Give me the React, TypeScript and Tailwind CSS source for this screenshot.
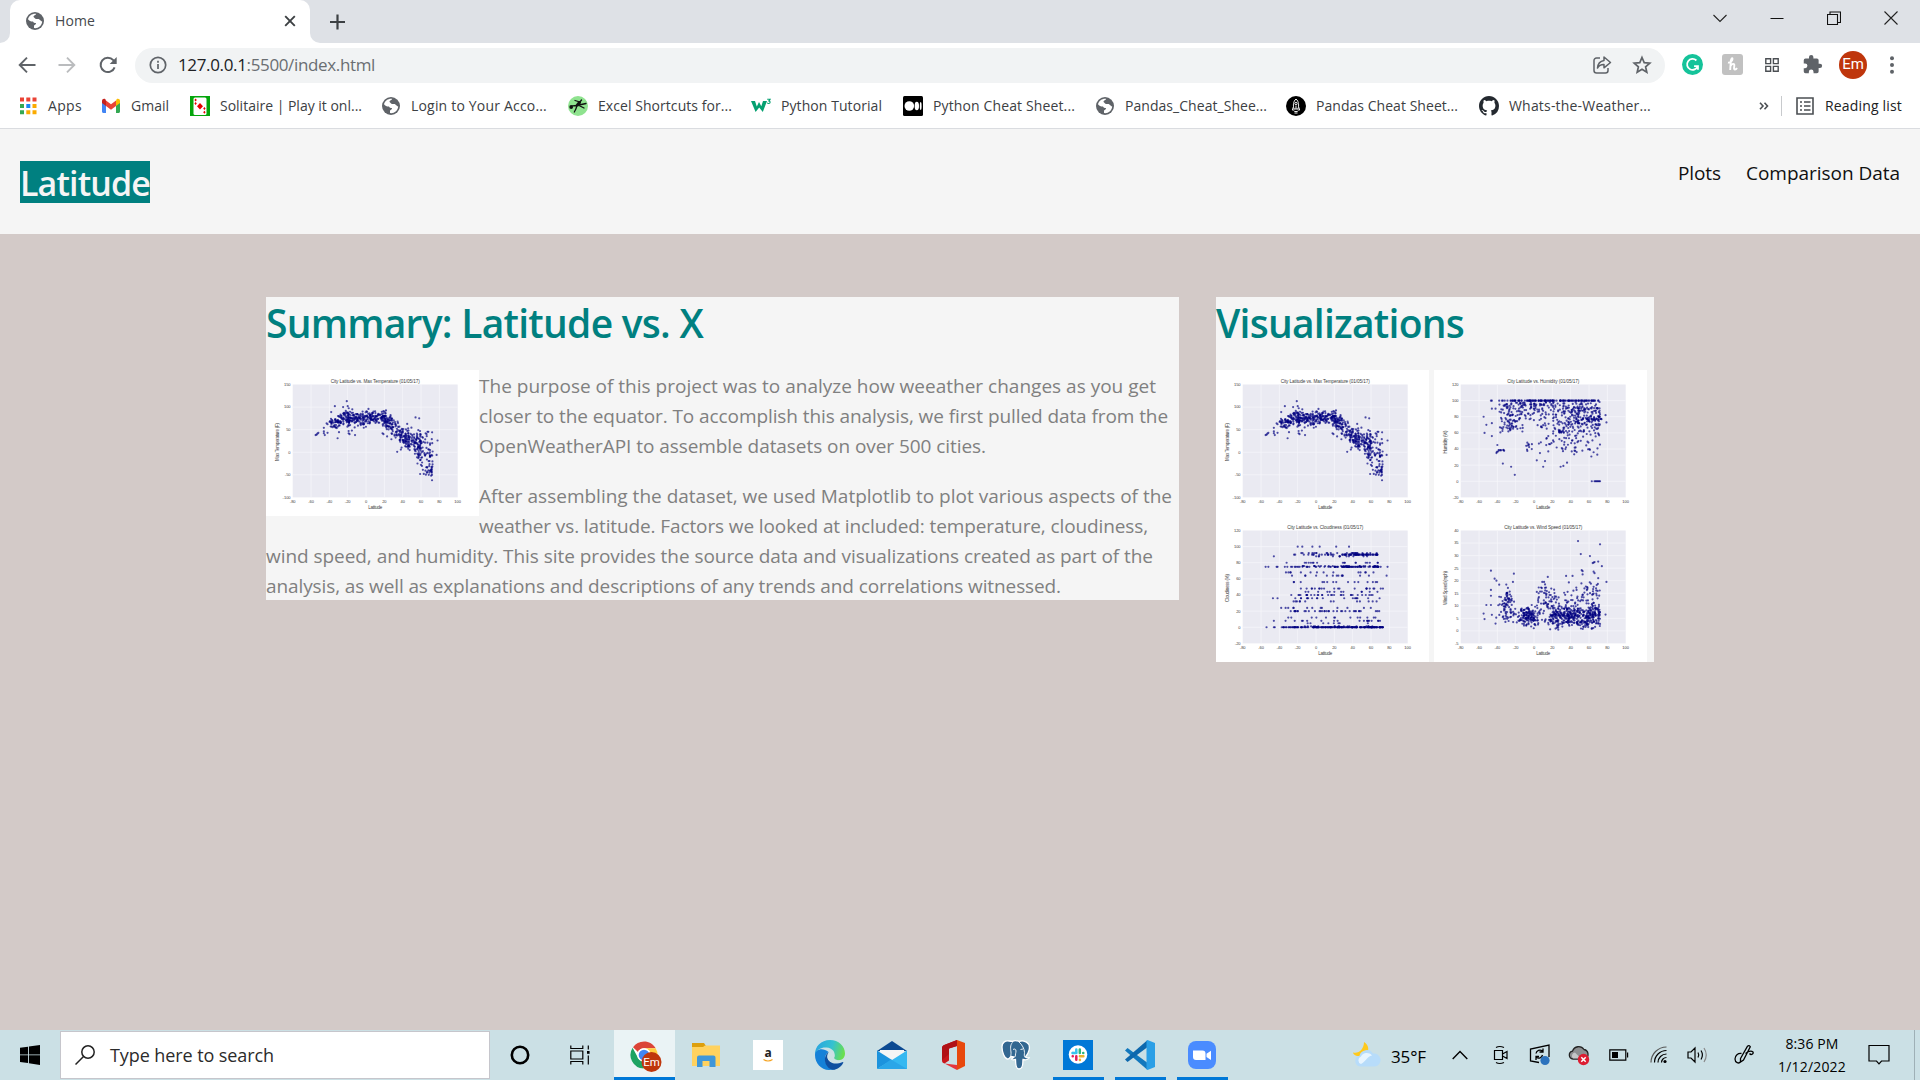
import { useLayoutEffect, useRef, type ReactNode } from 'react';

/* Text set to an exact advance width by spreading the difference over its letters. */
function Fit({ w, children, className = '' }: { w: number; children: ReactNode; className?: string }) {
  const ref = useRef<HTMLSpanElement>(null);
  useLayoutEffect(() => {
    const el = ref.current;
    if (!el) return;
    el.style.letterSpacing = '0px';
    const natural = el.getBoundingClientRect().width;
    const count = el.textContent ? el.textContent.length : 1;
    el.style.letterSpacing = `${(w - natural) / count}px`;
  }, [w]);
  return (
    <span ref={ref} className={`inline-block whitespace-nowrap ${className}`}>
      {children}
    </span>
  );
}

/* ---------- charts ---------- */

type Point = [number, number];

function rng(seed: number) {
  let s = seed;
  return () => {
    s = (s + 0x6d2b79f5) | 0;
    let t = Math.imul(s ^ (s >>> 15), 1 | s);
    t = (t + Math.imul(t ^ (t >>> 7), 61 | t)) ^ t;
    return ((t ^ (t >>> 14)) >>> 0) / 4294967296;
  };
}

const gauss = (r: () => number) => r() + r() + r() + r() - 2;

function temperature(): Point[] {
  const r = rng(7);
  const pts: Point[] = [
    [-21, 113], [-34, 102], [-20, 102], [-25, 100], [-38, 89], [-15, 95], [54, 77], [58, 75], [-55, 38], [-54, 39],
    [-53, 41], [-52, 43], [-46, 54], [-46, 46], [-46, 42], [-45, 38], [-42, 43], [-31, 31], [-19, 47], [-18, 40],
    [-12, 38], [-19, 42], [18, 42], [19, 40], [23, 35], [34, 1], [38, 6], [78, 26], [77, -6], [57, 49], [65, 42],
    [66, 40], [72, -62], [72, -50], [71, -52], [63, -48], [62, -39], [-42, 62], [-43, 64],
  ];
  const mean = (x: number) => {
    if (x < -20) return 74 + (x + 20) * 0.55;
    if (x < 18) return 77;
    if (x < 40) return 77 - (x - 18) * 1.75;
    return 38.5 - (x - 40) * 1.3;
  };
  for (let i = 0; i < 95; i++) {
    const x = -40 + r() * 22;
    pts.push([x, mean(x) + gauss(r) * 15]);
  }
  for (let i = 0; i < 220; i++) {
    const x = -21 + r() * 43;
    pts.push([x, mean(x) + gauss(r) * 12 - (r() < 0.1 ? 14 : 0)]);
  }
  for (let i = 0; i < 235; i++) {
    const x = 20 + r() * 40;
    pts.push([x, mean(x) + gauss(r) * (x > 42 ? 24 : 19)]);
  }
  for (let i = 0; i < 75; i++) {
    const x = 56 + r() * 17;
    pts.push([x, 6 + gauss(r) * 36]);
  }
  for (let i = 0; i < 20; i++) pts.push([64 + r() * 8, -42 + gauss(r) * 12]);
  return pts;
}

function humidity(): Point[] {
  const r = rng(21);
  const pts: Point[] = [
    [-55, 80], [-54, 60], [-52, 70], [-46, 90], [-42, 90], [-46, 56], [-46, 72], [-40, 45], [-41, 35], [-34, 22],
    [-25, 18], [-21, 8], [3, 26], [10, 18], [12, 25], [29, 18], [32, 19], [36, 23], [69, 33], [78, 82], [79, 73],
    [63, 0], [66, 0], [67, 0], [68, 0], [69, 0], [70, 0], [71, 0], [72, 0], [61, 39], [65, 36],
  ];
  for (let i = 0; i < 110; i++) pts.push([-26 + r() * 99, 100]);
  for (const x of [-47, -46, -38, -35, -34, -32, -29]) pts.push([x, 100]);
  for (let i = 0; i < 85; i++) pts.push([-38 + r() * 20, 98 - r() * 38]);
  for (let i = 0; i < 110; i++) pts.push([-20 + r() * 42, 98 - r() * r() * 44]);
  for (let i = 0; i < 250; i++) pts.push([20 + r() * 52, 76 + gauss(r) * 32]);
  for (let i = 0; i < 70; i++) pts.push([36 + r() * 36, 92 - r() * 22]);
  for (let i = 0; i < 16; i++) pts.push([56 + r() * 18, 76 + r() * 2]);
  for (let i = 0; i < 38; i++) pts.push([-10 + r() * 60, 33 + r() * 25]);
  for (let i = 0; i < 9; i++) pts.push([-41 + r() * 9, 35 + r() * 4]);
  return pts.filter((p) => p[1] <= 100);
}

function cloudiness(): Point[] {
  const r = rng(33);
  const pts: Point[] = [
    [-20, 100], [-15, 100], [-4, 100], [4, 100], [22, 100], [36, 100], [-46, 88], [-54, 0], [-46, 0], [-45, 0],
    [-55, 75], [-52, 75], [-43, 75], [-42, 75], [78, 75], [77, 64], [-47, 36], [-42, 36], [-38, 24], [-46, 8], [73, 48],
  ];
  const row = (y: number, n: number, a: number, b: number) => {
    for (let i = 0; i < n; i++) pts.push([a + r() * (b - a), y]);
  };
  row(0, 180, -4, 73);
  row(0, 36, -41, -5);
  row(75, 55, -36, 74);
  row(75, 30, 20, 70);
  row(76, 26, -16, 68);
  row(90, 60, 28, 67);
  row(92, 24, -38, 72);
  row(90, 16, -25, 20);
  row(88, 12, -10, 60);
  row(80, 18, -36, 72);
  row(68, 14, -36, 64);
  row(64, 13, -36, 64);
  row(56, 15, -30, 70);
  row(48, 20, -30, 72);
  row(44, 12, -12, 68);
  row(40, 30, -30, 64);
  row(36, 18, -34, 70);
  row(32, 13, -34, 70);
  row(24, 12, -34, 66);
  row(20, 34, -32, 72);
  row(12, 13, -34, 66);
  row(8, 18, -36, 70);
  row(5, 8, -10, 70);
  row(1, 18, -20, 70);
  return pts;
}

function wind(): Point[] {
  const r = rng(55);
  const pts: Point[] = [
    [48, 35.8], [72, 34.5], [51, 30.6], [61, 29.8], [70, 27.6], [65, 27.2], [64, 27], [66, 27.4], [74, 25.8], [-47, 24],
    [-22, 22.8], [52, 24.2], [53, 23.8], [53, 22.5], [65, 23.6], [66, 23], [15, 21.5], [35, 21.9], [42, 21.9], [-43, 20.8],
    [-41, 20], [-38, 18.4], [-47, 16.3], [-47, 14], [-52, 10.3], [-47, 10.3], [-39, 10.2], [-46, 6.4], [-55, 6.9],
    [-54, 4.7], [-42, 2.9], [79, 19.5], [78, 6.5], [70, 21], [9, 19.5], [11, 19.5], [12, 18.5], [-23, 19.5], [38, 19.3],
  ];
  for (let i = 0; i < 80; i++) pts.push([-29 + gauss(r) * 8, 8.5 + gauss(r) * 6 + r() * r() * 7]);
  for (let i = 0; i < 140; i++) pts.push([-7 + gauss(r) * 9, 4.7 + gauss(r) * 3.4 + r() * r() * r() * 6]);
  for (let i = 0; i < 70; i++) pts.push([3 + r() * 19, 2.5 + r() * 15]);
  for (let i = 0; i < 330; i++) pts.push([17 + r() * 55, 4.4 + gauss(r) * 3.6 + r() * r() * 4]);
  for (let i = 0; i < 130; i++) pts.push([22 + r() * 50, 6 + r() * r() * 14]);
  for (let i = 0; i < 24; i++) pts.push([48 + r() * 22, 12 + r() * 7]);
  return pts.filter((p) => p[1] > 0.4);
}

type Chart = {
  title: string;
  titleWidth: number;
  yLabel: string;
  yLabelWidth: number;
  yMin: number;
  yMax: number;
  step: number;
  points: Point[];
};

const charts: Chart[] = [
  { title: 'City Latitude vs. Max Temperature (01/05/17)', titleWidth: 89, yLabel: 'Max Temperature (F)', yLabelWidth: 38, yMin: -100, yMax: 150, step: 50, points: temperature() },
  { title: 'City Latitude vs. Humidity (01/05/17)', titleWidth: 72, yLabel: 'Humidity (%)', yLabelWidth: 23, yMin: -20, yMax: 120, step: 20, points: humidity() },
  { title: 'City Latitude vs. Cloudiness (01/05/17)', titleWidth: 76, yLabel: 'Cloudiness (%)', yLabelWidth: 28, yMin: -20, yMax: 120, step: 20, points: cloudiness() },
  { title: 'City Latitude vs. Wind Speed (01/05/17)', titleWidth: 78, yLabel: 'Wind Speed (mph)', yLabelWidth: 34, yMin: -5, yMax: 40, step: 5, points: wind() },
];

const L = 26.7;
const R = 191.7;
const T = 14.5;
const B = 127.4;
const sx = (v: number) => L + ((v + 80) / 180) * (R - L);

function Scatter({ chart, className = '' }: { chart: Chart; className?: string }) {
  const sy = (v: number) => B - ((v - chart.yMin) / (chart.yMax - chart.yMin)) * (B - T);
  const xs = Array.from({ length: 10 }, (_, i) => -80 + i * 20);
  const ys: number[] = [];
  for (let v = chart.yMin; v <= chart.yMax; v += chart.step) ys.push(v);
  const ly = (T + B) / 2 + 1;
  return (
    <svg viewBox="0 0 213 146" className={`block h-[146px] w-[213px] bg-white ${className}`} fontFamily="Liberation Sans, sans-serif" fill="#3c3c3c">
      <rect x={L} y={T} width={R - L} height={B - T} fill="#eaeaf2" />
      {xs.slice(1, -1).map((v) => (
        <line key={v} x1={sx(v)} x2={sx(v)} y1={T} y2={B} stroke="#f7f7fa" strokeWidth="0.7" />
      ))}
      {ys.slice(1, -1).map((v) => (
        <line key={v} x1={L} x2={R} y1={sy(v)} y2={sy(v)} stroke="#f7f7fa" strokeWidth="0.7" />
      ))}
      <g fill="#000080" fillOpacity="0.68">
        {chart.points.map((p, i) => (
          <circle key={i} cx={sx(p[0])} cy={sy(p[1])} r="1.1" />
        ))}
      </g>
      <text x={(L + R) / 2} y="12.6" textAnchor="middle" fontSize="4.7" textLength={chart.titleWidth}>
        {chart.title}
      </text>
      <text x={(L + R) / 2} y="139.4" textAnchor="middle" fontSize="4.5" textLength="14">
        Latitude
      </text>
      <text transform={`translate(13 ${ly}) rotate(-90)`} textAnchor="middle" fontSize="4.5" textLength={chart.yLabelWidth}>
        {chart.yLabel}
      </text>
      {xs.map((v) => (
        <text key={v} x={sx(v)} y="133.4" textAnchor="middle" fontSize="4">
          {v}
        </text>
      ))}
      {ys.map((v) => (
        <text key={v} x="24.6" y={sy(v) + 1.4} textAnchor="end" fontSize="4">
          {v}
        </text>
      ))}
    </svg>
  );
}

/* ---------- browser icons ---------- */

const Globe = () => (
  <svg viewBox="0 0 20 20" className="h-5 w-5 shrink-0">
    <circle cx="10" cy="10" r="9" fill="#5f6368" />
    <path d="M11.2 2.8c-3.6-.6-7.3 1.7-8.2 5.4 1.2 1.6 3 2.4 5 2.3.4 1.3 1.6 1.5 3 1.6 0 1.6-.9 1.8-2 2.4v2.6c4.3.6 8-2.600 8.2-6.600-1-.2-1.700-1-2.500-1.800-1-.9-2.500-.6-3.900-.6-1.200-1.300-2.500-1.800-2.300-2.600.3-1.200 2.200-.8 2.700-2.700z" fill="#fff" />
  </svg>
);

const AppsIcon = () => (
  <svg viewBox="0 0 20 20" className="h-5 w-5 shrink-0">
    <path d="M2 1.500h4v4H2zM8.300 1.500h4v4h-4zM14.500 1.500h4v4h-4z" fill="#ea4335" />
    <path d="M2 8h4v4H2zM2 14.300h4v4H2z" fill="#34a853" />
    <path d="M8.300 8h4v4h-4z" fill="#1a87f5" />
    <path d="M14.500 8h4v4h-4zM8.300 14.300h4v4h-4zM14.500 14.300h4v4h-4z" fill="#fbab00" />
  </svg>
);

const GmailIcon = () => (
  <svg viewBox="0 0 20 20" className="h-5 w-5 shrink-0">
    <path d="M1 5v10.500c0 .8.600 1.500 1.500 1.500H5V8z" fill="#4285f4" />
    <path d="M15 8v9h2.500c.9 0 1.500-.7 1.500-1.500V5z" fill="#34a853" />
    <path d="M15 5v5l4-3V5c0-1.900-2-2.800-3.400-1.700z" fill="#fbbc04" />
    <path d="M5 10V4.500l5 3.800 5-3.800V10l-5 3.700z" fill="#ea4335" />
    <path d="M1 5v2l4 3V4.500L4.400 3.300C3 2.200 1 3.100 1 5z" fill="#c5221f" />
  </svg>
);

const SolitaireIcon = () => (
  <svg viewBox="0 0 20 20" className="h-5 w-5 shrink-0">
    <path d="M0 0h20v20H0z" fill="#04a50b" />
    <rect x="3.500" y="1.500" width="13" height="17.500" rx="1.500" fill="#fff" />
    <path d="M10 7l3 3.200-3 3.200-3-3.200zM5.600 2.500l1.200 1.500-1.200 1.500L4.400 4zM5.600 6l1.200 1.500L5.600 9 4.400 7.500zM14.400 11l1.200 1.500-1.200 1.500-1.200-1.500zM14.400 14.800l1.200 1.500-1.200 1.500-1.200-1.500z" fill="#e60000" />
  </svg>
);

const ExcelIcon = () => (
  <svg viewBox="0 0 20 20" className="h-5 w-5 shrink-0">
    <circle cx="10" cy="10" r="10" fill="#8fe38f" />
    <g fill="none" stroke="#111" strokeLinecap="round">
      <path d="M9.500 9l2-2.500" strokeWidth="3" />
      <path d="M7 4.500l5 1.500 1.500-2M11 9l7-1.500M11 9.500l5 2.500M9 9.500c-.5 2-1 4-2.700 6.500M8.500 9.500l-4 .3" strokeWidth="1.300" />
    </g>
    <circle cx="3.200" cy="11" r="1.900" fill="#111" />
  </svg>
);

const W3Icon = () => (
  <svg viewBox="0 0 20 20" className="h-5 w-5 shrink-0">
    <path d="M0 5h4l1.800 5.500L8 6l2.300 4.300L12 5h4l-4.200 11L8.200 11.600 4.600 16z" fill="#04a070" />
    <path d="M16.200 3.200h3l-1.300 1.700c1.700.2 1.600 2.600-.1 2.600-.8 0-1.300-.3-1.600-.8" fill="none" stroke="#04a070" strokeWidth="1.100" />
  </svg>
);

const MediumIcon = () => (
  <svg viewBox="0 0 20 20" className="h-5 w-5 shrink-0">
    <rect width="20" height="20" rx="1.500" />
    <g fill="#fff">
      <circle cx="6.300" cy="10" r="4.800" />
      <ellipse cx="13.800" cy="10" rx="2.200" ry="4.300" />
      <ellipse cx="17.700" cy="10" rx=".9" ry="4" />
    </g>
  </svg>
);

const RocketIcon = () => (
  <svg viewBox="0 0 20 20" className="h-5 w-5 shrink-0">
    <circle cx="10" cy="10" r="10" />
    <g fill="none" stroke="#eee" strokeWidth="1">
      <path d="M10 3c3 2.500 3 6.500 2 10H8c-1-3.500-1-7.500 2-10z" />
      <circle cx="10" cy="7.500" r="1.200" />
      <path d="M7.500 10.500L6.300 14l2 0M12.500 10.500l1.200 3.500-2 0M8.300 15.500h3.400M10 9.500V13M8.500 17h3" />
    </g>
  </svg>
);

const GithubIcon = () => (
  <svg viewBox="0 0 16 16" className="h-5 w-5 shrink-0">
    <path d="M8 0C3.580 0 0 3.580 0 8c0 3.540 2.290 6.530 5.470 7.590.4.070.55-.17.55-.38 0-.19-.01-.82-.01-1.490-2.010.37-2.530-.49-2.690-.94-.09-.23-.48-.94-.82-1.130-.28-.15-.68-.52-.01-.53.63-.01 1.080.58 1.230.82.72 1.210 1.870.87 2.330.66.070-.52.28-.87.51-1.070-1.780-.2-3.640-.89-3.640-3.950 0-.87.31-1.590.82-2.150-.08-.2-.36-1.020.08-2.120 0 0 .67-.21 2.200.82.640-.18 1.320-.27 2-.27s1.360.09 2 .27c1.530-1.040 2.200-.82 2.200-.82.44 1.100.16 1.920.08 2.120.51.56.82 1.270.82 2.150 0 3.070-1.870 3.750-3.650 3.950.29.25.54.73.54 1.480 0 1.070-.01 1.930-.01 2.200 0 .21.15.46.55.38A8.010 8.010 0 0 0 16 8c0-4.420-3.580-8-8-8z" fill="#24292f" />
  </svg>
);

const bookmarks: { icon: ReactNode; label: string; w: number; pitch: string }[] = [
  { icon: <AppsIcon />, label: 'Apps', w: 34, pitch: 'w-[83px]' },
  { icon: <GmailIcon />, label: 'Gmail', w: 38, pitch: 'w-[89px]' },
  { icon: <SolitaireIcon />, label: 'Solitaire | Play it onl...', w: 142, pitch: 'w-[191px]' },
  { icon: <Globe />, label: 'Login to Your Acco...', w: 136, pitch: 'w-[187px]' },
  { icon: <ExcelIcon />, label: 'Excel Shortcuts for...', w: 134, pitch: 'w-[183px]' },
  { icon: <W3Icon />, label: 'Python Tutorial', w: 101, pitch: 'w-[152px]' },
  { icon: <MediumIcon />, label: 'Python Cheat Sheet...', w: 142, pitch: 'w-[192px]' },
  { icon: <Globe />, label: 'Pandas_Cheat_Shee...', w: 142, pitch: 'w-[191px]' },
  { icon: <RocketIcon />, label: 'Pandas Cheat Sheet...', w: 142, pitch: 'w-[193px]' },
  { icon: <GithubIcon />, label: 'Whats-the-Weather...', w: 142, pitch: 'w-[190px]' },
];

function TabStrip() {
  return (
    <div className="flex h-[43px] items-stretch bg-[#dee1e6]">
      <div className="flex w-[10px] bg-white">
        <div className="w-full rounded-br-[10px] bg-[#dee1e6]" />
      </div>
      <div className="flex w-[300px] items-center rounded-t-[10px] bg-white pb-px pl-[15px] pr-[14px]">
        <Globe />
        <Fit w={40} className="ml-[10px] text-[14px] leading-5 text-[#45494d]">
          Home
        </Fit>
        <svg viewBox="0 0 12 12" className="ml-auto h-3 w-3" stroke="#3c4043" strokeWidth="1.900">
          <path d="M1.200 1.200l9.600 9.600M10.800 1.200l-9.600 9.600" />
        </svg>
      </div>
      <div className="flex w-[10px] bg-white">
        <div className="w-full rounded-bl-[10px] bg-[#dee1e6]" />
      </div>
      <svg viewBox="0 0 16 16" className="ml-[9px] h-4 w-4 self-center" stroke="#3c4043" strokeWidth="2.200">
        <path d="M8.500 .5v15M1 8h15" />
      </svg>
      <div className="ml-auto flex h-[36px] items-center pr-[22px]">
        <svg viewBox="0 0 14 14" className="mr-[43px] h-3.5 w-3.5" fill="none" stroke="#222" strokeWidth="1.100">
          <path d="M.5 4l6.500 6.500L13.500 4" />
        </svg>
        <svg viewBox="0 0 14 14" className="mr-[43px] h-3.5 w-3.5" stroke="#111" strokeWidth="1">
          <path d="M.5 7.500h13" />
        </svg>
        <svg viewBox="0 0 14 14" className="mr-[43px] h-3.5 w-3.5" fill="none" stroke="#111" strokeWidth="1.100">
          <path d="M.5 3.500h10v10H.5zM3 3V1h10.500v10.500H11" />
        </svg>
        <svg viewBox="0 0 14 14" className="h-3.5 w-3.5" stroke="#222" strokeWidth="1.100">
          <path d="M.5.5l13 13M13.500.5l-13 13" />
        </svg>
      </div>
    </div>
  );
}

function Toolbar() {
  return (
    <div className="flex h-[44px] items-center bg-white pl-[17px] pb-px">
      <svg viewBox="0 0 20 20" className="h-5 w-5" fill="none" stroke="#5f6368" strokeWidth="1.900">
        <path d="M18.500 10H3M10 2.700L2.700 10l7.300 7.300" />
      </svg>
      <svg viewBox="0 0 20 20" className="ml-5 h-5 w-5" fill="none" stroke="#babcbe" strokeWidth="1.900">
        <path d="M1.500 10H17M10 2.700l7.300 7.300-7.300 7.300" />
      </svg>
      <svg viewBox="0 0 20 20" className="ml-[21px] h-5 w-5" fill="none" stroke="#5f6368" strokeWidth="2">
        <path d="M16.600 12.300A7.200 7.200 0 1 1 15.300 5.200L17 7" />
        <path d="M18.700 2v7h-7z" fill="#5f6368" stroke="none" />
      </svg>
      <div className="ml-[17px] mt-[2px] flex h-[35px] w-[1530px] items-center rounded-full bg-[#f1f3f4] pb-px pl-[14px] pr-[13px]">
        <svg viewBox="0 0 18 18" className="h-[18px] w-[18px]" fill="none" stroke="#5f6368" strokeWidth="1.700">
          <circle cx="9" cy="9" r="7.700" />
          <path d="M9 8v5M9 4.800v1.900" />
        </svg>
        <Fit w={197} className="ml-[11px] text-[17px] text-[#6a6e72]">
          <span className="text-[#202124]">127.0.0.1</span>:5500/index.html
        </Fit>
        <svg viewBox="0 0 20 20" className="ml-auto h-5 w-5" fill="none" stroke="#5f6368" strokeWidth="1.500">
          <path d="M8 3H4.500A2.500 2.500 0 0 0 2 5.500v10A2.500 2.500 0 0 0 4.500 18h9a2.500 2.500 0 0 0 2.500-2.500V13" />
          <path d="M12 2l6.500 5.500-6.500 5.300V9.600c-3-.1-5 .9-6.500 3.400.3-4 2.500-7 6.500-7.600z" strokeLinejoin="round" />
        </svg>
        <svg viewBox="0 0 20 20" className="ml-5 h-5 w-5" fill="none" stroke="#5f6368" strokeWidth="1.700">
          <path d="M10 2.500l2.200 5.100 5.600.5-4.200 3.700 1.200 5.400-4.800-2.900-4.800 2.900 1.200-5.400L2.200 8.100l5.600-.5z" />
        </svg>
      </div>
      <svg viewBox="0 0 20 20" className="ml-[17px] h-[21px] w-[21px]">
        <circle cx="10" cy="10" r="10" fill="#15c39a" />
        <path d="M13.700 6.200A5.200 5.200 0 1 0 15 11.500h-3.500M15.200 11v4" fill="none" stroke="#fff" strokeWidth="1.700" />
      </svg>
      <svg viewBox="0 0 21 21" className="ml-[19px] h-[21px] w-[21px]">
        <rect width="21" height="21" rx="3" fill="#c1c1c1" />
        <path d="M6 8.500c2 .5 4.500-1.500 4.500-3.500S8.500 5 8.700 8.500L8.200 16M8.500 12c1.500-2.500 4-3 3.800-.5-.1 2-.8 4.200.7 4 1 0 1.500-.6 2-1.500" fill="none" stroke="#fff" strokeWidth="1.900" />
      </svg>
      <svg viewBox="0 0 14 14" className="ml-[22px] h-[14px] w-[14px]" fill="none" stroke="#4b4f53" strokeWidth="1.400">
        <path d="M.8.8h4.800v4.800H.8zM8.400.8h4.800v4.800H8.400zM.8 8.400h4.800v4.800H.8zM8.400 8.400h4.800v4.800H8.400z" />
      </svg>
      <svg viewBox="0 0 24 24" className="ml-[23px] h-[21px] w-[21px]" fill="#5f6368">
        <path d="M20.500 11H19V7a2 2 0 0 0-2-2h-4V3.500a2.500 2.500 0 0 0-5 0V5H4a2 2 0 0 0-2 2v3.800h1.500a2.700 2.700 0 0 1 0 5.400H2V20a2 2 0 0 0 2 2h3.800v-1.500a2.700 2.700 0 0 1 5.400 0V22H17a2 2 0 0 0 2-2v-4h1.500a2.500 2.500 0 0 0 0-5z" />
      </svg>
      <div className="ml-[16px] flex h-7 w-7 items-center justify-center rounded-full bg-[#bf360c] font-['Roboto'] text-[15px] text-white">Em</div>
      <svg viewBox="0 0 6 18" className="ml-[22px] h-[18px] w-[6px]" fill="#5f6368">
        <circle cx="3" cy="2.200" r="2" />
        <circle cx="3" cy="9" r="2" />
        <circle cx="3" cy="15.800" r="2" />
      </svg>
    </div>
  );
}

function BookmarksBar() {
  return (
    <div className="flex h-[42px] items-center border-b border-[#dadce0] bg-white pb-[4px] pl-[18px] pt-[1px] text-[14px] text-[#3c4043]">
      {bookmarks.map((b) => (
        <div key={b.label} className={`flex shrink-0 items-center gap-[10px] ${b.pitch}`}>
          {b.icon}
          <Fit w={b.w} className="pb-[2px]">{b.label}</Fit>
        </div>
      ))}
      <svg viewBox="0 0 10 8" className="ml-[90px] h-2 w-[10px]" fill="none" stroke="#4b4f53" strokeWidth="1.600">
        <path d="M1 .7L4 4 1 7.300M5.500.7l3 3.300-3 3.300" />
      </svg>
      <div className="ml-3 h-5 w-px bg-[#c8cacd]" />
      <svg viewBox="0 0 18 18" className="ml-[14px] h-[18px] w-[18px]" fill="none" stroke="#4b4f53" strokeWidth="1.600">
        <path d="M1 1h16v16H1zM8 5h6.500M8 9h6.500M8 13h6.500M4 5h2M4 9h2M4 13h2" />
      </svg>
      <Fit w={77} className="ml-[11px] pb-[2px] text-[#202124]">
        Reading list
      </Fit>
    </div>
  );
}

/* ---------- page ---------- */

function Page() {
  return (
    <div className="flex h-[901px] flex-col bg-[#d3cac8]">
      <nav className="flex h-[105px] items-start justify-between bg-[#f5f5f5] pl-5 pr-5">
        <div className="mt-8 flex h-[42px] w-[130px] items-center bg-[#008080] pt-[2px] text-[34px] font-semibold leading-[40px] text-[#f5f5f5]">
          <Fit w={130}>Latitude</Fit>
        </div>
        <div className="mt-[29px] flex gap-[25px] text-[19px] leading-[30px] text-[#101010]">
          <Fit w={43}>Plots</Fit>
          <Fit w={154}>Comparison Data</Fit>
        </div>
      </nav>
      <main className="mt-[63px] flex items-start gap-[37px] pl-[266px]">
        <section className="h-[303px] w-[913px] bg-[#f5f5f5]">
          <h1 className="mb-[25px] h-[48px] text-[39px] font-semibold leading-[51px] text-[#008080]">
            <Fit w={437}>Summary: Latitude vs. X</Fit>
          </h1>
          <Scatter chart={charts[0]} className="float-left" />
          <div className="pt-[1px] text-[19px] leading-[30px] text-[#808080]">
            <p className="mb-5">
              <Fit w={677} className="align-top">The purpose of this project was to analyze how weeather changes as you get</Fit>{' '}
              <Fit w={689} className="align-top">closer to the equator. To accomplish this analysis, we first pulled data from the</Fit>{' '}
              <Fit w={507} className="align-top">OpenWeatherAPI to assemble datasets on over 500 cities.</Fit>
            </p>
            <p>
              <Fit w={693} className="align-top">After assembling the dataset, we used Matplotlib to plot various aspects of the</Fit>{' '}
              <Fit w={669} className="align-top">weather vs. latitude. Factors we looked at included: temperature, cloudiness,</Fit>{' '}
              <Fit w={887} className="align-top">wind speed, and humidity. This site provides the source data and visualizations created as part of the</Fit>{' '}
              <Fit w={795} className="align-top">analysis, as well as explanations and descriptions of any trends and correlations witnessed.</Fit>
            </p>
          </div>
        </section>
        <section className="h-[365px] w-[438px] bg-[#f5f5f5]">
          <h1 className="mb-[25px] h-[48px] text-[39px] font-semibold leading-[51px] text-[#008080]">
            <Fit w={248}>Visualizations</Fit>
          </h1>
          <div className="grid w-[431px] grid-cols-[213px_213px] gap-x-[5px]">
            {charts.map((c) => (
              <Scatter key={c.title} chart={c} />
            ))}
          </div>
        </section>
      </main>
    </div>
  );
}

/* ---------- taskbar ---------- */

const ChromeIcon = () => (
  <svg viewBox="0 0 32 32" className="h-8 w-8">
    <circle cx="14" cy="15" r="13.500" fill="#fff" />
    <path d="M14 1.500c5 0 9.300 2.700 11.700 6.750H14a6.750 6.750 0 0 0-6 3.700L3 7.300A13.500 13.500 0 0 1 14 1.500z" fill="#db4437" />
    <path d="M2.600 7.750A13.500 13.500 0 0 0 13.500 28.500l5.300-8.500A6.750 6.750 0 0 1 8.100 18z" fill="#1ea362" />
    <path d="M25.700 8.250A13.500 13.500 0 0 1 13.300 28.500L19.800 18.400A6.750 6.750 0 0 0 14 8.250z" fill="#ffcd40" />
    <circle cx="14" cy="15" r="6.800" fill="#fff" />
    <circle cx="14" cy="15" r="5.300" fill="#4285f4" />
    <circle cx="21.500" cy="22" r="10" fill="#bf360c" />
    <text x="21.500" y="26" textAnchor="middle" fontFamily="Roboto, sans-serif" fontSize="11.500" fill="#fff">Em</text>
  </svg>
);

const ExplorerIcon = () => (
  <svg viewBox="0 0 28 24" className="h-6 w-7">
    <path d="M0 0h12l2 3v5H0z" fill="#dd9f0d" />
    <path d="M0 4h11l2-1.500h15V23H0z" fill="#ffd25f" />
    <path d="M5 24v-9.500a2 2 0 0 1 2-2h14.500a2 2 0 0 1 2 2V24h-6v-6h-7v6z" fill="#3f97d9" />
  </svg>
);

const EdgeIcon = () => (
  <svg viewBox="0 0 30 30" className="h-[30px] w-[30px]">
    <defs>
      <linearGradient id="edgeTop" x1="0" y1="0.300" x2="1" y2="0.500">
        <stop offset="0" stopColor="#2aa5e0" />
        <stop offset="0.550" stopColor="#35c1d0" />
        <stop offset="1" stopColor="#6be04c" />
      </linearGradient>
    </defs>
    <path d="M15 0C6 0 0 6.500 0 14v1c2-6 7-8 11.500-7.500 6 .5 9 4.500 8 9-.5 1.500-.7 2.500 2.500 3.500 4 1 8-1.500 8-6.500C30 6 23.500 0 15 0z" fill="url(#edgeTop)" />
    <path d="M0 15c0 8 6 15 14 15 4 0 6.500-1 6.500-1-7-1-11-6-10.500-11 .3-3 1.800-5 3.500-6C8 7 0 9 0 15z" fill="#1581d8" />
    <path d="M10 18c.5-3 2-5 4-6 0 0-2 2-1.500 5.500.7 4 5 6.500 9.500 6 3-.3 5-1.500 6-1.500.5 0 .3.700 0 1.200C25.500 28 20 30.500 16.500 29.500 12 28 9.300 23 10 18z" fill="#0f4fa0" />
    <path d="M14 12.500c2.500-1 5.500.5 5.600 3.300 0 1.500-1.200 2-.9 2.900.4 1.300 3.500 2 5.500 1.600-2 3.400-8.500 3.400-11-.5-1.400-2.300-1.200-5.300.8-7.300z" fill="#cce0e5" />
  </svg>
);

const MailIcon = () => (
  <svg viewBox="0 0 30 28" className="h-7 w-[30px]">
    <path d="M0 10L15 0l15 10z" fill="#0b4a92" />
    <path d="M3 9h24v10H3z" fill="#f5f5f5" />
    <path d="M0 9.500l15 9.500L0 28z" fill="#1c93dd" />
    <path d="M30 9.500L15 19 0 28h30z" fill="#35b8f1" />
    <path d="M14 18.500L30 28H0z" fill="#2ba6e8" />
  </svg>
);

const OfficeIcon = () => (
  <svg viewBox="0 0 24 30" className="h-[30px] w-6">
    <path d="M15 0l8 3v23l-8 4z" fill="#e8480c" />
    <path d="M15 0v6L7 8.500v12l-4.500 3C.8 23 0 22 0 20.500V8c0-1.500.8-2.500 2.200-3z" fill="#c8171b" />
    <path d="M2.500 23.500L15 25v5z" fill="#e5353d" />
    <path d="M15 0v6L7 8.500V14L0 20V8c0-1.500.8-2.500 2.200-3z" fill="#b01116" />
  </svg>
);

const PostgresIcon = () => (
  <svg viewBox="0 0 30 30" className="h-[30px] w-[30px]">
    <path d="M8 1C4 .5 1 2.500 1 7c0 5 2.500 11.500 5.500 12 1.500.3 2.500-1.500 3.500-2.500l3 .5c-1 1-3 1.500-2 2.500 1 .8 2.500 0 3.500 0 .3 3-.5 9.500 3.500 9.500 5 0 3.500-6.500 4-9.500 2 .5 5 0 6-1.500-2 0-3 0-3.500-1C28 13 29.500 7 27.500 4 25 .5 20.500.5 18 1.500 15 .3 13 .5 11.500 1.500z" fill="#336791" stroke="#fff" strokeWidth="1.300" />
    <path d="M11.500 2.500C9 5 9.500 9 10 12c.3 2-.5 3.500 0 4.500M18 2c3 2.500 5.500 7 5.500 10.500 0 1.800-.8 3.500.7 5M12 9.500c1.500-1 3-.5 3 1.500s-1 3.500-.5 5.500M19.500 9.500l2.500-.5" fill="none" stroke="#fff" strokeWidth=".9" />
  </svg>
);

const SlackIcon = () => (
  <svg viewBox="0 0 30 30" className="h-[30px] w-[30px]">
    <path d="M0 0h30v30H0z" fill="#0078d7" />
    <circle cx="15" cy="14.500" r="9.300" fill="#fff" />
    <g strokeWidth="2.500" strokeLinecap="round">
      <path d="M13.300 9.500v3.200M9.700 13h.3" stroke="#36c5f0" />
      <path d="M9.700 12.900h3.500" stroke="#36c5f0" />
      <path d="M16.800 9.500v3.500M20.200 12.900h.1" stroke="#2eb67d" />
      <path d="M16.900 16.300h3.500M16.900 19.800v.1" stroke="#ecb22e" />
      <path d="M13.300 16.300v3.500M9.700 16.300h.1" stroke="#e01e5a" />
    </g>
  </svg>
);

const CodeIcon = () => (
  <svg viewBox="0 0 30 30" className="h-[30px] w-[30px]">
    <path d="M0 10.500l2.500-2.500L22 22.500v7z" fill="#1278bd" />
    <path d="M0 19.500L2.500 22 22 7.500v-7z" fill="#0d68ad" />
    <path d="M22.500 0L30 3v24l-7.500 3c-.5-.2-1-.5-1-1V1c0-.5.500-.8 1-1z" fill="#2a9fe6" />
  </svg>
);

const ZoomIcon = () => (
  <svg viewBox="0 0 28 28" className="h-7 w-7">
    <rect width="28" height="28" rx="8" fill="#4a8cff" />
    <path d="M5 9.500h9.500a3 3 0 0 1 3 3V19H8a3 3 0 0 1-3-3zM18.500 12.700l4.500-3v9.300l-4.500-3z" fill="#fff" />
  </svg>
);

const AmazonIcon = () => (
  <div className="flex h-[30px] w-[30px] flex-col items-center justify-center bg-white">
    <span className="text-[12px] font-bold leading-[10px] text-[#222]">a</span>
    <svg viewBox="0 0 10 3" className="mt-[1px] h-[3px] w-[10px]" fill="none" stroke="#f5a11c" strokeWidth="1.200">
      <path d="M.5.5q4.500 3 9 0" />
    </svg>
  </div>
);

const apps: { name: string; icon: ReactNode; running?: boolean }[] = [
  { name: 'explorer', icon: <ExplorerIcon /> },
  { name: 'amazon', icon: <AmazonIcon /> },
  { name: 'edge', icon: <EdgeIcon /> },
  { name: 'mail', icon: <MailIcon /> },
  { name: 'office', icon: <OfficeIcon /> },
  { name: 'postgres', icon: <PostgresIcon /> },
  { name: 'slack', icon: <SlackIcon />, running: true },
  { name: 'code', icon: <CodeIcon />, running: true },
  { name: 'zoom', icon: <ZoomIcon />, running: true },
];

function Tray() {
  return (
    <div className="ml-auto flex items-center">
      <svg viewBox="0 0 28 26" className="h-[26px] w-7">
        <path d="M11 0c5 3 6 9 1 14H4C1 13 0 11.500 0 10.500 6 12 11 7 11 0z" fill="#ffc91c" />
        <path d="M7 24.500a5.500 5.500 0 0 1-.5-10.800A7.500 7.500 0 0 1 20 11.500a6.500 6.500 0 0 1 2 13z" fill="#b7dcfa" />
        <path d="M8 22a4 4 0 0 1 0-7.500 6.500 6.500 0 0 1 11-1c-5 1-5 5-11 8.500z" fill="#e8f5ff" />
      </svg>
      <Fit w={35} className="ml-[10px] pt-[3px] text-[17px]">35°F</Fit>
      <svg viewBox="0 0 16 10" className="ml-[26px] h-[10px] w-4" fill="none" stroke="#000" strokeWidth="1.400">
        <path d="M.7 9L8 1.500 15.300 9" />
      </svg>
      <svg viewBox="0 0 16 20" className="ml-[25px] h-5 w-4" fill="none" stroke="#000" strokeWidth="1.200">
        <path d="M1.500 5.500h8v9h-8zM9.500 9l4.500-2.500v7L9.500 11M3 2.500q3.500-2 8 0M3 17.500q3.500 2 8 0" />
      </svg>
      <svg viewBox="0 0 22 22" className="ml-[20px] h-[22px] w-[22px]" fill="none" stroke="#000" strokeWidth="1.300">
        <path d="M10 18.500L1.500 17V5L20 1v12M7 9.500A4 4 0 0 1 13.500 7M14 4.500V8h-3.500M13.500 11A4 4 0 0 1 7.500 13.500M7 16v-3.500h3" />
        <circle cx="16" cy="16.500" r="4.600" fill="#2b72bd" stroke="none" />
      </svg>
      <svg viewBox="0 0 22 22" className="ml-[17px] h-[22px] w-[22px]">
        <path d="M5 15a4 4 0 0 1-.5-7.900A6.500 6.500 0 0 1 16 5.500 5 5 0 0 1 17 15z" fill="#8d8f91" stroke="#222" strokeWidth="1.300" />
        <path d="M5 14.500a3.500 3.500 0 0 1 2-6L13 14.500z" fill="#c4c6c7" />
        <circle cx="15.500" cy="15.500" r="5.700" fill="#dc1d32" />
        <path d="M13.300 13.300l4.400 4.400M17.700 13.300l-4.400 4.400" stroke="#fff" strokeWidth="1.500" />
      </svg>
      <svg viewBox="0 0 20 12" className="ml-[19px] h-3 w-5" fill="none" stroke="#000" strokeWidth="1.200">
        <path d="M.8.800h16v10.400H.8z" />
        <path d="M3 3h6v6H3zM18 3.500h1.200v5H18z" fill="#000" stroke="none" />
      </svg>
      <svg viewBox="0 0 18 18" className="ml-[21px] h-[18px] w-[18px]" fill="none" stroke="#000" strokeWidth="1.200">
        <path d="M1 16.500A15.500 15.500 0 0 1 16.500 1" stroke="#555" />
        <path d="M4.500 16.500a12 12 0 0 1 12-12M8 16.500a8.500 8.500 0 0 1 8.500-8.500M11.500 16.500a5 5 0 0 1 5-5" />
        <circle cx="15" cy="15.500" r="1.600" fill="#000" stroke="none" />
      </svg>
      <svg viewBox="0 0 22 18" className="ml-[19px] h-[18px] w-[22px]" fill="none" stroke="#000" strokeWidth="1.200">
        <path d="M1 6h3l4-4v14l-4-4H1zM11 6.500q1.500 2.500 0 5M14 4.500q2.800 4.500 0 9" />
        <path d="M17 2q4.500 7 0 14" stroke="#888" />
      </svg>
      <svg viewBox="0 0 22 22" className="ml-[24px] h-[22px] w-[22px]" fill="none" stroke="#000" strokeWidth="1.300">
        <path d="M7.500 14.500L14.500 2.200q1.600-1.500 2.800.6L10.500 16l-3 2zM8.500 9.500c-3.500-.5-6.500 2-6.500 5.500 0 3.500 4 5.500 5.500 2.500M12.500 9.500c2-1.500 5-3.500 7.500-1.500 1 2-2 3.500-3.500 1.500" />
      </svg>
      <div className="ml-[17px] flex w-[80px] flex-col items-center text-[14px] leading-[23px]">
        <Fit w={53}>8:36 PM</Fit>
        <Fit w={68}>1/12/2022</Fit>
      </div>
      <svg viewBox="0 0 22 22" className="ml-[16px] h-[22px] w-[22px]" fill="none" stroke="#000" strokeWidth="1.200">
        <path d="M1 1.500h20v15.500h-7.500L11 19.800 8.500 17H1z" />
      </svg>
      <div className="ml-[24px] h-[50px] w-px bg-[#9fb0b6]" />
      <div className="w-[5px]" />
    </div>
  );
}

function Taskbar() {
  return (
    <div className="flex h-[50px] items-stretch bg-[#cbe0e5] text-black">
      <div className="flex w-[60px] items-center justify-center">
        <svg viewBox="0 0 20 20" className="h-5 w-5">
          <path d="M0 2.800L8 1.700v7.700H0zM8.900 1.600L20 0v9.400H8.900zM0 10.300h8V18l-8-1.100zM8.900 10.300H20V20L8.900 18.200z" />
        </svg>
      </div>
      <div className="mt-px mb-px flex w-[430px] items-center border border-[#c6c6cc] bg-white pl-[14px]">
        <svg viewBox="0 0 20 20" className="h-5 w-5" fill="none" stroke="#222" strokeWidth="1.500">
          <circle cx="13" cy="7" r="6.200" />
          <path d="M8.500 11.500L.5 19.500" />
        </svg>
        <Fit w={164} className="ml-[15px] pt-px text-[18px] text-[#2b2b2b]">
          Type here to search
        </Fit>
      </div>
      <div className="flex w-[60px] items-center justify-center">
        <svg viewBox="0 0 20 20" className="h-5 w-5" fill="none" stroke="#000" strokeWidth="2.600">
          <circle cx="10" cy="10" r="8.200" />
        </svg>
      </div>
      <div className="flex w-[60px] items-center justify-center">
        <svg viewBox="0 0 20 20" className="h-5 w-5" fill="none" stroke="#000" strokeWidth="1.200">
          <path d="M.8.500v3h12v-3M.8 19.500v-3h12v3M.8 6h12v8h-12zM18.300.500v4M18.300 10.500v9" />
          <path d="M17 6h2.600v2.800H17z" fill="#000" stroke="none" />
        </svg>
      </div>
      <div className="ml-[4px] flex w-[61px] items-center justify-center border-b-[3px] border-[#0078d7] bg-[#eaf3f5] pl-[2px] pt-[4px]">
        <ChromeIcon />
      </div>
      {apps.map((a) => (
        <div key={a.name} className="flex w-[62px] flex-col items-center">
          <div className="flex flex-1 items-center pt-[3px]">{a.icon}</div>
          <div className={a.running ? 'h-[3px] w-[51px] bg-[#0078d7]' : 'h-[3px]'} />
        </div>
      ))}
      <Tray />
    </div>
  );
}

export default function App() {
  return (
    <div className="h-[1080px] w-[1920px] overflow-hidden font-['Open_Sans','Noto_Sans',sans-serif]">
      <TabStrip />
      <Toolbar />
      <BookmarksBar />
      <Page />
      <Taskbar />
    </div>
  );
}
